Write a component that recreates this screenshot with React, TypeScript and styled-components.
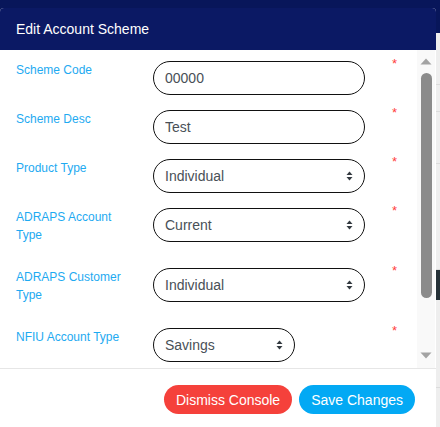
import React from 'react';
import styled, { createGlobalStyle } from 'styled-components';

const GlobalStyle = createGlobalStyle`
  html, body {
    margin: 0;
    padding: 0;
    background: #eeeeee;
    font-family: "Liberation Sans", Arial, sans-serif;
  }
  * { box-sizing: border-box; }
`;

const Page = styled.div`
  position: relative;
  width: 440px;
  height: 427px;
  overflow: hidden;
  background: #eeeeee;
`;

const NavBar = styled.div`
  height: 33px;
  background: #08165a;
`;

const PageContent = styled.div`
  display: flex;
  flex-direction: column;
`;

const PageLine = styled.div<{ $h: number }>`
  height: ${p => p.$h}px;
  border-bottom: 1px solid #dcdcdc;
`;

const DarkStrip = styled.div`
  height: 30px;
  margin-left: 436px;
  background: #263238;
`;

const Modal = styled.div`
  position: absolute;
  top: 8px;
  left: 0;
  width: 436px;
  bottom: -20px;
  background: #ffffff;
  border-radius: 4px 4px 0 0;
  display: flex;
  flex-direction: column;
  overflow: hidden;
`;

const Header = styled.div`
  height: 42px;
  flex: none;
  background: #0b1964;
  color: #ffffff;
  font-size: 14px;
  display: flex;
  align-items: center;
  padding-left: 16px;
  padding-bottom: 1px;
`;

const Body = styled.div`
  height: 319px;
  flex: none;
  display: flex;
  border-bottom: 1px solid #e6e6e6;
`;

const Form = styled.div`
  flex: 1;
  overflow: hidden;
  display: flex;
  flex-direction: column;
  gap: 15px;
  padding: 11px 0 40px 16px;
`;

const ScrollTrack = styled.div`
  width: 18px;
  margin-right: 1px;
  flex: none;
  background: #f9f9f9;
  display: flex;
  flex-direction: column;
  align-items: center;
  padding: 8px 0 9px;
`;

const ScrollThumb = styled.div`
  width: 11px;
  height: 225px;
  margin-top: 8px;
  border-radius: 6px;
  background: #8b8b8b;
`;

const ScrollSpacer = styled.div`
  flex: 1;
`;

const Row = styled.div`
  display: grid;
  grid-template-columns: 137px 239px auto;
  align-items: start;
`;

const Label = styled.label`
  font-size: 12px;
  line-height: 18px;
  color: #1eaaf1;
  padding-right: 20px;
  margin-bottom: 9px;
`;

const Field = styled.div<{ $w: number }>`
  position: relative;
  width: ${p => p.$w}px;
  height: 34px;
`;

const TextInput = styled.input`
  width: 100%;
  height: 100%;
  border: 1px solid #111111;
  border-radius: 17px;
  padding: 0 11px;
  font-family: "Liberation Sans", Arial, sans-serif;
  font-size: 14px;
  color: #495057;
  background: #ffffff;
  outline: none;
`;

const Select = styled.select`
  width: 100%;
  height: 100%;
  border: 1px solid #111111;
  border-radius: 17px;
  padding: 0 28px 0 11px;
  font-family: "Liberation Sans", Arial, sans-serif;
  font-size: 14px;
  color: #495057;
  background: #ffffff;
  appearance: none;
  outline: none;
`;

const Arrows = styled.svg`
  position: absolute;
  right: 12px;
  top: 12px;
  pointer-events: none;
`;

const Required = styled.span`
  color: #ff4040;
  font-size: 13px;
  line-height: 13px;
  margin-top: -4px;
`;

const Footer = styled.div`
  display: flex;
  justify-content: flex-end;
  gap: 7px;
  padding: 16px 21px 0 0;
`;

const Button = styled.button<{ $tone: 'danger' | 'primary' }>`
  height: 29px;
  border: none;
  border-radius: 15px;
  padding: 0 12px;
  font-family: "Liberation Sans", Arial, sans-serif;
  font-size: 14px;
  color: #ffffff;
  background: ${p => (p.$tone === 'danger' ? '#f5413b' : '#03a9f4')};
  cursor: pointer;
`;

type FieldDef = {
  label: string;
  value: string;
  kind: 'text' | 'select';
  width?: number;
};

const fields: FieldDef[] = [
  { label: 'Scheme Code', value: '00000', kind: 'text' },
  { label: 'Scheme Desc', value: 'Test', kind: 'text' },
  { label: 'Product Type', value: 'Individual', kind: 'select' },
  { label: 'ADRAPS Account Type', value: 'Current', kind: 'select' },
  { label: 'ADRAPS Customer Type', value: 'Individual', kind: 'select' },
  { label: 'NFIU Account Type', value: 'Savings', kind: 'select', width: 142 },
];

const SelectArrows = () => (
  <Arrows width="7" height="10" viewBox="0 0 7 10">
    <path d="M3.5 0.5 L6.5 4 L0.5 4 Z" fill="#343a40" />
    <path d="M3.5 9.5 L6.5 6 L0.5 6 Z" fill="#343a40" />
  </Arrows>
);

const App: React.FC = () => {
  return (
    <Page>
      <GlobalStyle />
      <NavBar />
      <PageContent>
        <PageLine $h={52} />
        <PageLine $h={27} />
        <PageLine $h={52} />
        <PageLine $h={106} />
        <DarkStrip />
        <PageLine $h={88} />
      </PageContent>

      <Modal>
        <Header>Edit Account Scheme</Header>
        <Body>
          <Form>
            {fields.map(f => (
              <Row key={f.label}>
                <Label>{f.label}</Label>
                <Field $w={f.width ?? 212}>
                  {f.kind === 'text' ? (
                    <TextInput defaultValue={f.value} />
                  ) : (
                    <>
                      <Select defaultValue={f.value}>
                        <option>{f.value}</option>
                      </Select>
                      <SelectArrows />
                    </>
                  )}
                </Field>
                <Required>*</Required>
              </Row>
            ))}
          </Form>
          <ScrollTrack>
            <svg width="12" height="7" viewBox="0 0 12 7">
              <path d="M6 0.5 L11.5 6.5 L0.5 6.5 Z" fill="#a3a3a3" />
            </svg>
            <ScrollThumb />
            <ScrollSpacer />
            <svg width="12" height="7" viewBox="0 0 12 7">
              <path d="M6 6.5 L11.5 0.5 L0.5 0.5 Z" fill="#a3a3a3" />
            </svg>
          </ScrollTrack>
        </Body>
        <Footer>
          <Button $tone="danger">Dismiss Console</Button>
          <Button $tone="primary">Save Changes</Button>
        </Footer>
      </Modal>
    </Page>
  );
};

export default App;
